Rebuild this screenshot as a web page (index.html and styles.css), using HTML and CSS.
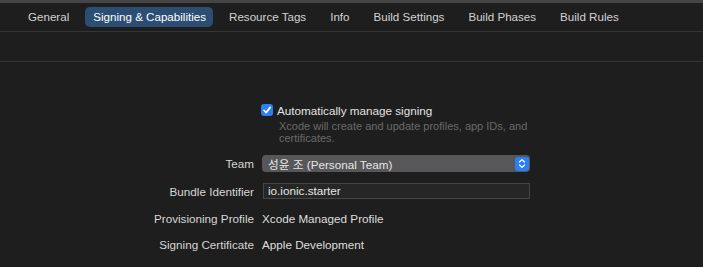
FILE: index.html
```
<!DOCTYPE html>
<html>
<head>
<meta charset="utf-8">
<link rel="stylesheet" href="styles.css">
</head>
<body>
<div class="topstrip"></div>
<nav class="tabs">
  <span class="tab">General</span>
  <span class="tab active">Signing &amp; Capabilities</span>
  <span class="tab">Resource Tags</span>
  <span class="tab">Info</span>
  <span class="tab">Build Settings</span>
  <span class="tab">Build Phases</span>
  <span class="tab">Build Rules</span>
</nav>
<div class="toolbar"></div>
<main class="content">
  <div class="row check-row">
    <span></span>
    <label class="check">
      <span class="box"><svg width="12" height="12" viewBox="0 0 12 12"><path d="M3 6.3 L5.1 8.6 L9.2 3.4" fill="none" stroke="#fff" stroke-width="1.7" stroke-linecap="round" stroke-linejoin="round"/></svg></span>
      <span class="check-label">Automatically manage signing</span>
    </label>
  </div>
  <div class="row desc-row">
    <span></span>
    <p class="desc">Xcode will create and update profiles, app IDs, and certificates.</p>
  </div>
  <div class="row team-row">
    <span class="label">Team</span>
    <div class="popup">
      <span class="popup-text">성윤 조 (Personal Team)</span>
      <span class="stepper"><svg width="8" height="11" viewBox="0 0 8 11"><path d="M1.5 4 L4 1.6 L6.5 4 M1.5 7 L4 9.4 L6.5 7" fill="none" stroke="#fff" stroke-width="1.3" stroke-linecap="round" stroke-linejoin="round"/></svg></span>
    </div>
  </div>
  <div class="row field-row">
    <span class="label">Bundle Identifier</span>
    <div class="field">io.ionic.starter</div>
  </div>
  <div class="row text-row">
    <span class="label">Provisioning Profile</span>
    <span class="value">Xcode Managed Profile</span>
  </div>
  <div class="row text-row last">
    <span class="label">Signing Certificate</span>
    <span class="value">Apple Development</span>
  </div>
</main>
</body>
</html>
```
FILE: styles.css
```
html, body {
  margin: 0;
  padding: 0;
  background: #1e1e1e;
  height: 100%;
  overflow: hidden;
}
body {
  font-family: "Liberation Sans", "Noto Sans CJK KR", Arial, sans-serif;
  font-size: 11.7px;
  color: #dcdcdc;
}
.topstrip {
  height: 3px;
  background: #454545;
}
.tabs {
  display: flex;
  align-items: center;
  gap: 8px;
  padding-left: 20px;
  border-bottom: 1px solid #353535;
  box-sizing: border-box;
  height: 29px;
  font-size: 11.6px;
}
.tab {
  padding: 0 8px;
  height: 20px;
  line-height: 20px;
  border-radius: 5px;
  color: #d2d2d2;
  white-space: nowrap;
}
.tab.active {
  background: #2d4e74;
  color: #ffffff;
  padding: 0 7px 0 8px;
}
.toolbar {
  height: 29px;
  border-bottom: 1px solid #353535;
}
.content {
  padding-top: 40px;
}
.row {
  display: grid;
  grid-template-columns: 254px 268px;
  column-gap: 8px;
  align-items: center;
}
.label {
  text-align: right;
  color: #d6d6d6;
}
.value {
  color: #dedede;
}
.check {
  display: flex;
  align-items: center;
  gap: 4px;
  margin-left: -1px;
  height: 16px;
}
.box {
  width: 12px;
  height: 12px;
  border-radius: 3px;
  background: #2a7ff5;
  display: flex;
}
.check-label {
  color: #e2e2e2;
}
.desc-row {
  margin-top: 2px;
}
.desc {
  margin: 0;
  padding-left: 17px;
  font-size: 11px;
  line-height: 12px;
  color: #6a6a6a;
  width: 255px;
}
.team-row {
  margin-top: 11px;
}
.popup {
  height: 17px;
  background: #575759;
  border-radius: 4px;
  display: flex;
  align-items: center;
  justify-content: space-between;
  padding: 0 1px 0 6px;
  box-sizing: border-box;
  color: #e6e6e6;
}
.stepper {
  width: 14px;
  height: 14px;
  border-radius: 3px;
  background: #2a7ff5;
  display: flex;
  align-items: center;
  justify-content: center;
}
.field-row {
  margin-top: 11px;
}
.field {
  height: 16px;
  box-sizing: border-box;
  border: 1px solid #454545;
  background: #262626;
  padding-left: 4px;
  line-height: 14px;
  color: #e6e6e6;
  margin-left: 1px;
}
.text-row {
  margin-top: 11px;
  height: 16px;
}
.text-row.last {
  margin-top: 10px;
}
```
